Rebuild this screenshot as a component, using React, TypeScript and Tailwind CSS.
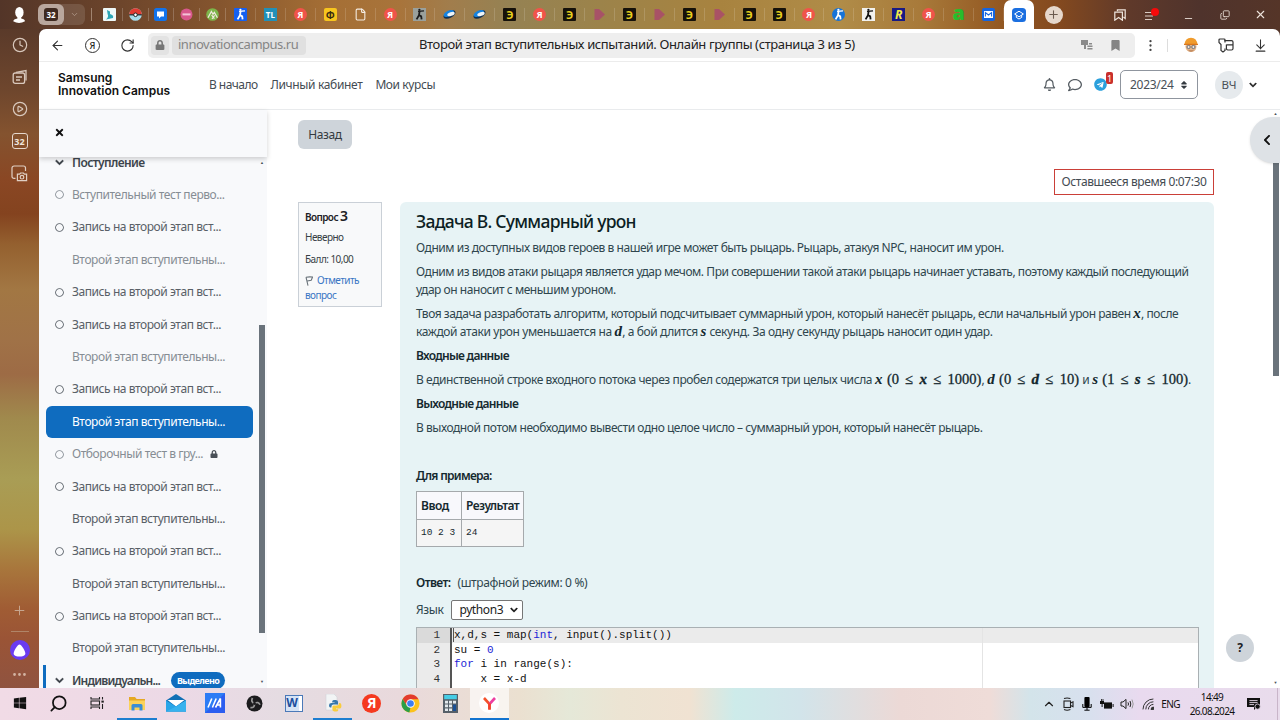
import type { ReactNode } from "react";
import {
  ArrowLeft, RotateCw, ArrowDownToLine, X, Clock, CirclePlay, Plus, Ellipsis, EllipsisVertical, File, ChevronDown,
  ChevronUp, Search, Minus, Copy,
} from "lucide-react";
import {
  FaRegBell, FaRegComment, FaTelegram, FaChevronDown, FaChevronLeft, FaLock, FaTimes, FaRegCircle, FaSort, FaWindows,
  FaBookmark,
} from "react-icons/fa";

function Fav({ children }: { children: ReactNode }) {
  return <div className="flex h-[13px] w-[13px] items-center justify-center">{children}</div>;
}

const Chev = ({ size = 9, color = "#343a40" }: { size?: number; color?: string }) => (
  <FaChevronDown size={size} color={color} stroke={color} strokeWidth={30} className="shrink-0" />
);

const Ya = () => (
  <div className="flex h-[13px] w-[13px] items-center justify-center rounded-full bg-[#f0544a] text-[9px] leading-none font-bold text-white">Я</div>
);
const Eh = () => (
  <div className="flex h-[13px] w-[13px] items-center justify-center rounded-[1px] bg-[#15110a] text-[11px] leading-none font-bold text-[#e8cf1e]">Э</div>
);
const Play = () => (
  <svg width="13" height="13" viewBox="0 0 13 13"><path d="M1.5 1H6L12 6.5L6 12H1.5Z" fill="#a94a6c" opacity=".85" /></svg>
);
const Lens = () => (
  <svg width="14" height="13" viewBox="0 0 14 13">
    <ellipse cx="7" cy="6.5" rx="7" ry="3.8" transform="rotate(-28 7 6.5)" fill="#12304f" />
    <ellipse cx="6.2" cy="5.4" rx="6" ry="3" transform="rotate(-28 6.2 5.4)" fill="#1583e0" />
    <ellipse cx="8.6" cy="6" rx="4.2" ry="2" transform="rotate(-20 8.6 6)" fill="#eef4f8" />
  </svg>
);
const Runner = ({ bg, fg, r }: { bg: string; fg: string; r: number }) => (
  <svg width="13" height="13" viewBox="0 0 13 13">
    <rect width="13" height="13" rx={r} fill={bg} />
    <path d="M5 3.4L11 2.8" stroke={fg} strokeWidth="1.2" />
    <path d="M6.6 3.2L6 7.2L3.6 11.4M6 7L8.2 8.4L8.6 11.4" stroke={fg} strokeWidth="1.8" fill="none" />
    <circle cx="6.4" cy="1.8" r="1.1" fill={fg} />
  </svg>
);
const Mail = () => (
  <svg width="13" height="13" viewBox="0 0 13 13">
    <rect width="13" height="13" rx="2" fill="#1565e0" />
    <rect x="2" y="3" width="9" height="7" fill="#fff" />
    <path d="M3.4 8.6V4.6L6.5 7L9.6 4.6V8.6" stroke="#1565e0" strokeWidth="1.1" fill="none" />
  </svg>
);

const smallTabs: ReactNode[] = [
  <svg width="13" height="13" viewBox="0 0 13 13"><rect width="13" height="13" rx="1" fill="#eef8f8" /><path d="M4 2L7 3.6V6Q11 7 10 10L3 11.5Q6 9 4.6 6Z" fill="#2ba5b5" /></svg>,
  <svg width="13" height="13" viewBox="0 0 13 13"><circle cx="6.5" cy="6.5" r="6.3" fill="#a8dcea" /><path d="M.2 6.5A6.3 6.3 0 0 1 12.8 6.5Z" fill="#e23b32" /><path d="M.2 6.8H12.8" stroke="#222" strokeWidth="1.2" /><circle cx="6.5" cy="6.8" r="1.8" fill="#fff" stroke="#222" /></svg>,
  <svg width="13" height="13" viewBox="0 0 13 13"><rect width="13" height="13" rx="2.5" fill="#1273eb" /><path d="M3 3.5H10V8.5H7L5 10.4V8.5H3Z" fill="#fff" /></svg>,
  <svg width="13" height="13" viewBox="0 0 13 13"><circle cx="6.5" cy="6.5" r="6" fill="#d8588c" /><rect x="2.5" y="5.4" width="8" height="2" fill="#f3c3d7" /></svg>,
  <svg width="13" height="13" viewBox="0 0 13 13"><circle cx="6.5" cy="6.5" r="6.3" fill="#7db54a" /><path d="M2 9.8L5.4 3.4L7 6.2L8.4 4.4L11.4 9.8M5.6 7L8.4 10.6M8.6 7.4L6 10.8" stroke="#f2e9e0" strokeWidth="1.2" fill="none" /></svg>,
];

const wideTabs: ReactNode[] = [
  <Runner bg="#1560f2" fg="#fff" r={1} />,
  <div className="flex h-[13px] w-[13px] items-center justify-center bg-[#2290b8] text-[8px] leading-none font-bold text-white">TL</div>,
  <Ya />,
  <div className="flex h-[13px] w-[13px] items-center justify-center rounded-[2px] bg-[#f7c51e] text-[10px] leading-none font-bold text-[#3a2c10]">Ф</div>,
  <File size={13} color="#f4ece2" strokeWidth={2} />,
  <Ya />,
  <Runner bg="#9aa09c" fg="#1c1c1c" r={0} />,
  <Lens />, <Lens />, <Eh />, <Ya />, <Eh />, <Play />, <Eh />, <Play />, <Eh />, <Play />, <Eh />, <Eh />, <Ya />,
  <Runner bg="#1673d8" fg="#fff" r={6.5} />,
  <Runner bg="#f1f1ee" fg="#111" r={0} />,
  <div className="flex h-[13px] w-[13px] shrink-0 items-center justify-center bg-[#171a86] text-[12px] leading-none font-bold text-[#f3ec4a] italic">R</div>,
  <Ya />,
  <div className="flex h-[13px] items-center pb-[4px] text-[20px] leading-none font-black text-[#28bd2c]">a</div>,
  <Mail />,
];

function TabStrip() {
  return (
    <div className="flex h-[29px] shrink-0 items-center bg-[linear-gradient(90deg,#533528_0,#6d452b_120px,#85552e_220px,#a56f35_330px,#a8743b_400px,#a17d4c_450px,#958253_510px,#9c834a_600px,#a8833f_720px,#b08c48_840px,#a87a3a_920px,#935822_1000px,#83491f_1060px,#5f392a_1130px,#4f332c_1200px,#553528_1280px)]">
      <div className="flex w-[38px] shrink-0 justify-center">
        <svg width="14" height="18" viewBox="0 0 14 18"><ellipse cx="7.4" cy="6.4" rx="4.2" ry="5.4" fill="#fff" /><path d="M5.4 10H9.2V12.4Q13 13.2 13 15.2Q7 18.8 1.2 15.2Q1.4 13.2 5.4 12.4Z" fill="#fff" /></svg>
      </div>
      <div className="flex h-[21px] w-[47px] shrink-0 items-center rounded-[6px] bg-white/12">
        <div className="flex h-[21px] w-[26px] items-center justify-center rounded-[6px] bg-[#b9a79d]">
          <div className="flex h-[13px] w-[14px] items-center justify-center rounded-[3px] bg-[#3f2a20] text-[8px] leading-none font-bold text-white">32</div>
        </div>
        <ChevronDown className="ml-[6px]" size={9} color="#b59f90" />
      </div>
      <div className="mr-[5px] ml-[6px] h-[13px] w-px shrink-0 bg-[#a18470]" />
      {smallTabs.map((t, i) => (
        <div key={i} className="flex w-[25.8px] shrink-0 justify-center border-r border-white/20"><Fav>{t}</Fav></div>
      ))}
      {wideTabs.map((t, i) => (
        <div key={i} className="flex w-[29.93px] shrink-0 justify-center border-r border-white/15"><Fav>{t}</Fav></div>
      ))}
      <div className="flex h-full w-[30px] shrink-0 items-center justify-center rounded-t-[7px] bg-white">
        <svg width="14" height="14" viewBox="0 0 14 14"><rect width="14" height="14" rx="3.5" fill="#1b6fe0" /><path d="M7 3.2L11.4 6L7 8.8L2.6 6ZM4.3 7.2V9.4L7 11L9.7 9.4V7.2" fill="none" stroke="#fff" strokeWidth="1" /></svg>
      </div>
      <div className="ml-[11px] flex h-[18px] w-[18px] shrink-0 items-center justify-center rounded-full bg-[#e6d8cc]"><Plus size={13} color="#6b5a4e" /></div>
      <div className="flex grow items-center justify-between pr-[13px] pl-[51px]">
        <svg width="12" height="12" viewBox="0 0 12 12" fill="none" stroke="#eee4dc" strokeWidth="1.2"><path d="M3.4 2.2V.8H11.2V9.4L9.4 8" /><path d="M.8 3.2H8.4V11.2L4.6 8.6L.8 11.2Z" /></svg>
        <svg width="16" height="14" viewBox="0 0 16 14"><path d="M1 4.5H8M1 8H9M1 11.5H8" stroke="#d9ccc4" strokeWidth="1.2" /><circle cx="11" cy="4" r="4" fill="#f50a0a" /></svg>
        <Minus size={11} color="#e5dad3" className="mt-[7px] ml-[5px]" />
        <Copy size={10} color="#eee4dc" className="ml-[7px] -scale-y-100" />
        <X size={13} color="#eee4dc" className="ml-[6px]" />
      </div>
    </div>
  );
}

function Rail() {
  return (
    <div className="flex w-[39px] shrink-0 flex-col items-center bg-[linear-gradient(180deg,#5a3a2a_0,#6e462d_60px,#84532f_105px,#8a4724_150px,#84431f_185px,#94602f_215px,#a27743_260px,#a07247_310px,#9d6b45_345px,#a08a4d_390px,#a99d55_450px,#ac9549_500px,#a8763c_540px,#a05c34_580px,#9a5436_610px,#8f5340_659px)] pt-[8px]">
      <Clock size={16} color="#d9c8bc" strokeWidth={1.8} />
      <svg className="mt-[16px]" width="16" height="16" viewBox="0 0 16 16" fill="none" stroke="#d9c8bc" strokeWidth="1.3"><path d="M4 3.4L14 1.6V11.4" /><rect x="1.2" y="4" width="11.4" height="10.4" rx="2" /><path d="M4 8H10M4 11H8" /></svg>
      <CirclePlay className="mt-[16px]" size={16} color="#d9c8bc" strokeWidth={1.8} />
      <div className="mt-[16px] flex h-[16px] w-[16px] items-center justify-center rounded-[3px] border border-[#e6d8cd] text-[9px] leading-none font-bold text-[#f0e5dc]">32</div>
      <svg className="mt-[16px]" width="17" height="17" viewBox="0 0 17 17" fill="none" stroke="#e0cfc3" strokeWidth="1.2"><path d="M4.5 13.4H3A2 2 0 0 1 1 11.4V3A2 2 0 0 1 3 1H12.5A2 2 0 0 1 14.5 3V6" /><path d="M6.4 9.2H8.6L9.6 8H12.4L13.4 9.2H15.6V15.6H6.4Z" /><circle cx="11" cy="12.2" r="1.8" /></svg>
      <div className="grow" />
      <Plus size={15} color="#c9aa94" strokeWidth={1.5} />
      <div className="mt-[13px] h-px w-[18px] bg-[#b08568]" />
      <div className="mt-[8px] flex h-[20px] w-[20px] items-center justify-center rounded-full bg-[#6a3bf0]">
        <svg width="13" height="13" viewBox="0 0 13 13"><path d="M6.5 .5C8.5 .5 12.3 7 12.3 9.4C12.3 12 9 12.4 6.5 12.4S.7 12 .7 9.4C.7 7 4.5 .5 6.5 .5Z" fill="#fff" /></svg>
      </div>
      <Ellipsis className="mt-[6px] mb-[5px]" size={17} color="#d3b3a2" />
    </div>
  );
}

function AddressBar() {
  return (
    <div className="flex h-[33px] shrink-0 items-center border-b border-[#ececec]">
      <ArrowLeft className="ml-[11px]" size={15} color="#333" strokeWidth={1.7} />
      <div className="ml-[20px] flex h-[15px] w-[15px] items-center justify-center rounded-full border border-[#333] text-[9px] leading-none font-medium text-[#222]">Я</div>
      <RotateCw className="ml-[20px]" size={15} color="#333" strokeWidth={1.8} />
      <div className="ml-[13px] flex h-[25px] w-[987px] items-center rounded-[5px] bg-[#eeeeee] pl-[3px]">
        <div className="flex h-[19px] w-[18px] items-center justify-center rounded-[4px] bg-[#e3e3e3]"><FaLock size={10} color="#777" /></div>
        <div className="ml-[3px] flex h-[19px] w-[134px] items-center rounded-[4px] bg-[#e0e0e0] pl-[6px] text-[13px] tracking-[-0.5px] text-[#858585]">innovationcampus.ru</div>
        <div className="ml-[113px] text-[13px] tracking-[-0.38px] whitespace-nowrap text-[#222]">Второй этап вступительных испытаний. Онлайн группы (страница 3 из 5)</div>
        <svg className="ml-auto" width="12" height="12" viewBox="0 0 12 12" fill="#8a8a8a"><path d="M0 1H7V6H5V10H3V6H0Z" /><path d="M8 4H11V5.4H8ZM6.4 6.6H11.5V8H6.4ZM6.4 9H11.5V10.4H6.4Z" /></svg>
        <FaBookmark className="mr-[14px] ml-[17px]" size={11} color="#858585" />
      </div>
      <EllipsisVertical className="ml-[8px]" size={15} color="#444" strokeWidth={1.7} />
      <div className="ml-[9px] h-[13px] w-px bg-[#ddd]" />
      <svg className="ml-[15px]" width="16" height="16" viewBox="0 0 16 16"><circle cx="8" cy="9.5" r="5.5" fill="#e3b48a" /><path d="M1.6 7.6Q2 1 8 .8Q14 1 14.4 7.6Z" fill="#f09b2c" /><path d="M1 7.4H15" stroke="#d9761c" strokeWidth="1.4" /><circle cx="5.6" cy="10" r="1.6" fill="#f4e6dc" stroke="#5d6a78" strokeWidth=".9" /><circle cx="10.4" cy="10" r="1.6" fill="#f4e6dc" stroke="#5d6a78" strokeWidth=".9" /><path d="M5 13.2Q8 16 11 13.2Q8 14 5 13.2Z" fill="#a8683f" /></svg>
      <svg className="ml-[19px]" width="16" height="15" viewBox="0 0 16 15" fill="none" stroke="#333" strokeWidth="1.2"><path d="M7 4.4V2Q7 1 6 1H2Q1 1 1 2V4.5L3 6.5V12.5L5 14L7 12.5V10.4" /><path d="M6.4 2.6H13.5Q15 2.6 15 4V10.5Q15 12 13.5 12H9.8Q8.4 12 8.4 10.6V6.4M8.4 6.8H15" /></svg>
      <ArrowDownToLine className="ml-[19px]" size={15} color="#333" strokeWidth={1.7} />
    </div>
  );
}

function SiteHeader() {
  return (
    <div className="flex h-[48px] shrink-0 items-center border-b border-[#e9ebed] pb-[2px] text-[12px] text-[#444c53]">
      <div className="w-[170px] pl-[19px] font-['Inter',sans-serif] text-[12px] leading-[12.5px] font-semibold tracking-[0.01px] text-[#111]">
        Samsung<br />Innovation Campus
      </div>
      <div className="flex items-center gap-[13px] whitespace-nowrap">
        <span className="tracking-[-0.55px]">В начало</span>
        <span className="tracking-[-0.35px]">Личный кабинет</span>
        <span className="tracking-[-0.4px]">Мои курсы</span>
      </div>
      <FaRegBell className="ml-auto" size={13} color="#565d63" />
      <FaRegComment className="ml-[12px]" size={14} color="#565d63" />
      <div className="relative ml-[12px]">
        <FaTelegram size={13} color="#2ba0dc" />
        <div className="absolute -top-[6px] left-[12px] flex h-[12px] w-[7px] items-center justify-center rounded-[2px] bg-[#c9302c] text-[9px] leading-none text-white">1</div>
      </div>
      <div className="ml-[13px] flex h-[29px] w-[78px] items-center justify-between rounded-[5px] border border-[#8f959e] pr-[8px] pl-[9px] text-[12px] text-[#495057]">
        <span className="tracking-[-0.3px]">2023/24</span><FaSort size={10} color="#343a40" />
      </div>
      <div className="ml-[17px] flex h-[28px] w-[28px] items-center justify-center rounded-full bg-[#e6eaed] text-[11.5px] text-[#495057]">ВЧ</div>
      <div className="mr-[23px] ml-[6px]"><Chev size={8} color="#222" /></div>
    </div>
  );
}

type Item = { t: string; ring?: boolean; dim?: boolean; active?: boolean; lock?: boolean };
const rec = "Запись на второй этап вст...";
const second = "Второй этап вступительны...";
const items: Item[] = [
  { t: "Вступительный тест перво...", ring: true, dim: true },
  { t: rec, ring: true },
  { t: second, dim: true },
  { t: rec, ring: true },
  { t: rec, ring: true },
  { t: second, dim: true },
  { t: rec, ring: true },
  { t: second, active: true },
  { t: "Отборочный тест в гру...", ring: true, dim: true, lock: true },
  { t: rec, ring: true },
  { t: second },
  { t: rec, ring: true },
  { t: second },
  { t: rec, ring: true },
  { t: second },
];

function Sidebar() {
  return (
    <div className="flex w-[228px] shrink-0 flex-col bg-[#f8f9fb]">
      <div className="z-10 flex h-[47px] shrink-0 items-center pb-[2px] pl-[15px] shadow-[0_2px_5px_rgba(0,0,0,0.18)]"><FaTimes size={11} color="#111" /></div>
      <div className="flex min-h-0 grow overflow-hidden">
        <div className="-mt-[10.6px] flex w-[214px] flex-col pl-[4px]">
          <div className="flex h-[32.4px] shrink-0 items-center pl-[12px]">
            <Chev />
            <span className="ml-[8px] text-[12px] font-semibold tracking-[-0.6px] text-[#3e464d]">Поступление</span>
          </div>
          {items.map((it, i) => (
            <div key={i} className={"ml-[3px] flex h-[32.4px] shrink-0 items-center rounded-[6px] pl-[9px] text-[12px] whitespace-nowrap " + (it.active ? "bg-[#0f6cbf] text-white" : it.dim ? "text-[#868d94]" : "text-[#596067]")}>
              <div className="w-[17px] shrink-0">{it.ring && <FaRegCircle size={9} />}</div>
              <span className="tracking-[-0.43px]">{it.t}</span>
              {it.lock && <FaLock className="ml-[7px]" size={8} color="#495057" />}
            </div>
          ))}
          <div className="flex h-[32.4px] shrink-0 items-center border-l-[3px] border-[#0f6cbf] pl-[9px] whitespace-nowrap">
            <Chev />
            <span className="ml-[8px] text-[12px] font-semibold tracking-[-0.8px] text-[#3e464d]">Индивидуальн...</span>
            <span className="ml-[11px] rounded-full bg-[#0f6cbf] px-[6px] text-[9px] leading-[17px] font-bold tracking-[-0.6px] text-white">Выделено</span>
          </div>
        </div>
        <div className="flex w-[14px] flex-col items-center pt-[4px] text-[4px] leading-none text-[#495057]">
          <span className="ml-[4px]">▲</span>
          <div className="mt-[160px] ml-[4px] h-[308px] w-[6px] bg-[#6a737b]" />
          <span className="mt-[47px] ml-[4px]">▼</span>
        </div>
      </div>
    </div>
  );
}

function V({ children }: { children: ReactNode }) {
  return <i className="font-['Liberation_Serif',serif] text-[15px] leading-none font-bold tracking-[0.3px] text-[#12262d]">{children}</i>;
}
function M({ children }: { children: ReactNode }) {
  return <span className="font-['Liberation_Serif',serif] text-[14.5px] leading-none tracking-normal text-[#12262d] [-webkit-text-stroke:0.3px_#12262d] [word-spacing:2.6px]">{children}</span>;
}

function Editor() {
  return (
    <div className="mt-[7px] flex h-[90px] w-[783px] border border-[#a9b0b3] bg-white font-['Liberation_Mono',monospace] text-[11px] leading-[14.5px] tracking-normal">
      <div className="flex w-[35px] flex-col border-r-2 border-[#555] bg-[#ebebeb] text-right text-[#333]">
        <div className="bg-[#dadada] pr-[10px]">1</div>
        <div className="pr-[10px]">2</div>
        <div className="pr-[10px]">3</div>
        <div className="pr-[10px]">4</div>
      </div>
      <div className="flex w-[531px] flex-col border-r border-[#e4e4e4] whitespace-pre text-[#111]">
        <div className="flex bg-[#ebebeb] pl-[2px]"><span className="-ml-px h-[14px] border-l border-[#555]" />x,d,s = map(<span className="text-[#221fd6]">int</span>, input().split())</div>
        <div className="pl-[2px]">su = <span className="text-[#221fd6]">0</span></div>
        <div className="pl-[2px]"><span className="text-[#221fd6]">for</span> i in range(s):</div>
        <div className="pl-[2px]">{"    x = x-d"}</div>
      </div>
      <div className="h-[14.5px] grow bg-[#ebebeb]" />
    </div>
  );
}

function Question() {
  return (
    <div className="h-[600px] w-[814px] shrink-0 rounded-t-[6px] bg-[#e7f3f5] pt-[8px] pl-[16px] text-[12px] leading-[18px] tracking-[-0.455px] whitespace-nowrap text-[#2f464e]">
      <h1 className="mb-[7px] text-[17.5px] leading-[22px] font-medium tracking-[-0.72px] text-[#0c1e24]">Задача B. Суммарный урон</h1>
      <p className="mb-[6px]">Одним из доступных видов героев в нашей игре может быть рыцарь. Рыцарь, атакуя NPC, наносит им урон.</p>
      <p className="mb-[6px]">Одним из видов атаки рыцаря является удар мечом. При совершении такой атаки рыцарь начинает уставать, поэтому каждый последующий<br />удар он наносит с меньшим уроном.</p>
      <p className="mb-[6px] h-[36px]"><span className="tracking-[-0.47px]">Твоя задача разработать алгоритм, который подсчитывает суммарный урон, который нанесёт рыцарь, если начальный урон равен <V>x</V>, после</span><br /><span className="tracking-[-0.4px]">каждой атаки урон уменьшается на <V>d</V>, а бой длится <V>s</V> секунд. За одну секунду рыцарь наносит один удар.</span></p>
      <p className="mb-[6px] font-semibold tracking-[-0.72px] text-[#15292f]">Входные данные</p>
      <div className="mb-[6px] flex h-[18px] items-baseline tracking-[-0.41px]">
        <span>В единственной строке входного потока через пробел содержатся три целых числа</span>
        <span className="ml-[3px]"><V>x</V></span>
        <span className="ml-[4px]"><M>(0 ≤ <V>x</V> ≤ 1000)</M>,</span>
        <span className="ml-[3px]"><V>d</V></span>
        <span className="ml-[4px]"><M>(0 ≤ <V>d</V> ≤ 10)</M></span>
        <span className="ml-[3px]">и</span>
        <span className="ml-[3px]"><V>s</V></span>
        <span className="ml-[4px]"><M>(1 ≤ <V>s</V> ≤ 100)</M>.</span>
      </div>
      <p className="mb-[6px] font-semibold tracking-[-0.72px] text-[#15292f]">Выходные данные</p>
      <p className="mb-[30px]">В выходной потом необходимо вывести одно целое число – суммарный урон, который нанесёт рыцарь.</p>
      <p className="mb-[6px] font-semibold tracking-[-0.72px] text-[#15292f]">Для примера:</p>
      <div className="grid h-[56px] w-[108px] grid-cols-[45px_61px] grid-rows-[28px_26px] border border-[#a5a9ac] bg-[#f8f8fc] text-[#15292f]">
        <div className="flex items-center border-r border-b border-[#a5a9ac] pl-[4px] font-semibold">Ввод</div>
        <div className="flex items-center border-b border-[#a5a9ac] pl-[4px] font-semibold tracking-[-0.55px]">Результат</div>
        <div className="flex items-center border-r border-[#a5a9ac] bg-[#f5f5f5] pl-[4px] font-['Liberation_Mono',monospace] text-[9.5px] tracking-normal">10 2 3</div>
        <div className="flex items-center bg-[#f5f5f5] pl-[4px] font-['Liberation_Mono',monospace] text-[9.5px] tracking-normal">24</div>
      </div>
      <div className="mt-[27px] flex gap-[7px]"><b className="font-semibold tracking-[-0.6px] text-[#15292f]">Ответ:</b><span className="tracking-[-0.35px]">(штрафной режим: 0 %)</span></div>
      <div className="mt-[8px] flex h-[20px] items-center gap-[8px]">
        <span className="tracking-[-0.4px]">Язык</span>
        <div className="flex h-[20px] w-[72px] items-center justify-between rounded-[2px] border border-[#767676] bg-white pr-[4px] pl-[7px] tracking-[-0.4px] text-[#222]">python3<Chev size={8} color="#111" /></div>
      </div>
      <Editor />
    </div>
  );
}

function MainPane() {
  return (
    <div className="flex min-w-0 grow overflow-hidden bg-white">
      <div className="flex w-[947px] shrink-0 flex-col pt-[10px] pl-[31px]">
        <div className="flex h-[29px] w-[54px] shrink-0 items-center justify-center rounded-[6px] bg-[#ced4da] text-[12px] tracking-[-0.4px] text-[#343a40]">Назад</div>
        <div className="mt-[20px] ml-auto flex h-[26px] w-[160px] shrink-0 items-center justify-center border border-[#ca3f38] text-[12px] tracking-[-0.4px] whitespace-nowrap text-[#444b52]">Оставшееся время 0:07:30</div>
        <div className="mt-[7px] flex items-start justify-between">
          <div className="h-[105px] w-[84px] border border-[#cad0d7] bg-[#f8f9fa] pl-[6px] text-[10px] tracking-[-0.55px] text-[#373f46]">
            <div className="mt-[4px] leading-[18px]"><span className="font-semibold tracking-[-0.6px] text-[#1d2125]">Вопрос</span> <span className="text-[14px] font-semibold text-[#1d2125]">3</span></div>
            <div className="mt-[4px] leading-[15px]">Неверно</div>
            <div className="mt-[7px] leading-[14px]">Балл: 10,00</div>
            <div className="mt-[7px] leading-[14.5px] text-[#3a76c4]">
              <svg className="mr-[4px] inline" width="8" height="10" viewBox="0 0 8 10" fill="none" stroke="#6a737b" strokeWidth="1.1"><path d="M1 1.2L3 9.6M1 1.2Q4 .6 7.6 1L6.2 4.2L2.2 5" /></svg>Отметить<br />вопрос
            </div>
          </div>
          <Question />
        </div>
      </div>
      <div className="flex grow flex-col items-end">
        <div className="flex h-[7px] w-[9px] shrink-0 items-center justify-center text-[4px] leading-none text-[#495057]">▲</div>
        <div className="z-10 flex h-[46px] w-[30px] shrink-0 items-center justify-center rounded-l-full bg-[#dee2e6] pl-[3px] shadow"><FaChevronLeft size={12} color="#111" /></div>
        <div className="mr-[1px] h-[213px] w-[6px] shrink-0 bg-[#6a737b]" />
        <div className="mt-[258px] mr-[26px] flex h-[28px] w-[28px] shrink-0 items-center justify-center rounded-full bg-[#ced4da] text-[12px] font-bold text-[#1d2125]">?</div>
        <div className="mt-[17px] flex h-[8px] w-[9px] shrink-0 items-center justify-center text-[4px] leading-none text-[#495057]">▼</div>
      </div>
    </div>
  );
}

const apps: { el: ReactNode; line?: boolean; active?: boolean }[] = [
  { el: <FaWindows size={14} color="#111" /> },
  { el: <Search size={19} color="#111" strokeWidth={2.2} className="-scale-x-100" /> },
  { el: <svg width="15" height="14" viewBox="0 0 15 14" fill="none" stroke="#222" strokeWidth="1.1"><path d="M1 1V3H9.5V1M1 13V11H9.5V13M12.5 1V3.4M12.5 8V13" /><rect x="1" y="5" width="8.5" height="4" /><path d="M11.4 5.6H13.8" strokeWidth="2" /></svg> },
  { el: <svg width="18" height="17" viewBox="0 0 18 17"><path d="M1 2H7L8.6 4H17V15H1Z" fill="#e5a823" /><path d="M1 5.5H17V15H1Z" fill="#fbd25a" /><path d="M3.5 15.5V10.5Q3.5 9 5 9H13Q14.5 9 14.5 10.5V15.5H11.5V12.4H6.5V15.5Z" fill="#3a8ed6" /></svg>, line: true },
  { el: <svg width="20" height="18" viewBox="0 0 20 18"><path d="M0 6.5L10 0L20 6.5V17.5H0Z" fill="#1270b5" /><path d="M1.5 6H18.5L10 12.5Z" fill="#fff" /><path d="M0 6.5L10 12.5L20 6.5V17.5H0Z" fill="#29a5e8" /><path d="M0 17.5L10 12.5L20 6.5V17.5Z" fill="#38b2ee" /></svg> },
  { el: <svg width="20" height="20" viewBox="0 0 20 20"><rect width="20" height="20" fill="#2b5df0" /><path d="M0 0H20L0 20Z" fill="#2c7cf5" /><path d="M3 14.5L6.8 5.5M7.4 14.5L11.2 5.5M10.5 14.5L15.4 5.5V14.5M12 12H15.4" stroke="#fff" strokeWidth="1.6" fill="none" /></svg> },
  { el: <svg width="17" height="17" viewBox="0 0 17 17"><circle cx="8.5" cy="8.5" r="8" fill="#1b1b1d" /><path d="M8.5 8.5Q4.5 7 6.5 3M8.5 8.5Q12.5 6 14 9.8M8.5 8.5Q8.8 13 4.4 12.6" stroke="#999" strokeWidth="1.7" fill="none" /><circle cx="8.5" cy="8.5" r="1.4" fill="#1b1b1d" /></svg> },
  { el: <div className="flex h-[17px] w-[18px] items-center border border-[#4a79b8] bg-white"><div className="flex h-[15px] w-[13px] items-center justify-center bg-[#d5e3f5] text-[12px] leading-none font-bold text-[#1d4f9e]">W</div></div> },
  { el: <svg width="18" height="18" viewBox="0 0 18 18"><path d="M2 0H10L13 3V16H2Z" fill="#f2f4f5" stroke="#d0d5d8" strokeWidth=".6" /><path d="M10.5 6Q14 5.4 14 7.8V10.6H9.4Q7.4 10.6 7.4 13.4H6.4Q5 13.4 5 11.2Q5 9 7.6 9H10.6V8.4H8.2V7.4Q8.4 6 10.5 6Z" fill="#3777ab" /><path d="M12 17.6Q8.4 17.6 8.4 15.6V12.8Q8.4 11.6 10 11.6H13Q15 11.6 15 9H15.8Q17.4 9 17.4 12Q17.4 14.6 15 14.6H12V15.2H14.2V16.2Q14 17.6 12 17.6Z" fill="#f9cc3d" /></svg>, line: true },
  { el: <div className="flex h-[19px] w-[19px] items-center justify-center rounded-full bg-[#f5391f] text-[14px] leading-none font-bold text-white">Я</div> },
  { el: <svg width="19" height="19" viewBox="0 0 20 20"><circle cx="10" cy="10" r="9.5" fill="#fbc21b" /><path d="M1.8 5.2A9.5 9.5 0 0 1 18.4 5.6H10L6 12Z" fill="#e33b2e" /><path d="M1.8 5.2L6.2 12.4L10 14.2L8.8 19.4A9.5 9.5 0 0 1 1.8 5.2Z" fill="#2a9e48" /><circle cx="10" cy="10" r="4.5" fill="#fff" /><circle cx="10" cy="10" r="3.5" fill="#3c7ef0" /></svg> },
  { el: <svg width="15" height="19" viewBox="0 0 15 19"><rect width="15" height="19" fill="#566069" /><rect x="1.2" y="1" width="12.6" height="4.2" fill="#46cce5" /><path d="M2 6.8H5V9.4H2ZM6 6.8H9V9.4H6ZM10 6.8H13V9.4H10ZM2 10.6H5V13.2H2ZM6 10.6H9V13.2H6ZM2 14.4H5V17H2ZM6 14.4H9V17H6Z" fill="#e2e8ec" /><path d="M10 10.6H13V17H10Z" fill="#1a4f94" /></svg> },
  { el: <div className="flex h-[20px] w-[20px] items-center justify-center rounded-full bg-white"><svg width="13" height="13" viewBox="0 0 13 13" fill="none" strokeWidth="2.6"><path d="M1 1L6.5 7V12.6" stroke="#f4512c" /><path d="M12 1L6.5 7" stroke="#ee3fa0" /><path d="M6.5 6.4V12.6" stroke="#f4412c" /></svg></div>, active: true },
];

function Taskbar() {
  return (
    <div className="flex h-[32px] shrink-0 bg-[linear-gradient(90deg,#f1dbe6_0,#ecd9e6_180px,#e5dce2_280px,#e9d9dc_400px,#ebe0d0_520px,#e5e8d8_570px,#ece4d3_620px,#f0e2d2_690px,#cdebea_735px,#d2e4ea_800px,#ecd9d6_900px,#efdcd8_990px,#d3e4ea_1030px,#d8e0ee_1090px,#e9daef_1140px,#e9dcec_1280px)] text-[10px] text-[#111]">
      {apps.map((a, i) => (
        <div key={i} className={"flex w-[39.15px] shrink-0 items-center justify-center border-b-2 " + (a.active ? "border-[#1173cf] bg-white/65" : a.line ? "border-[#1d7ed0]" : "border-transparent")}>{a.el}</div>
      ))}
      <div className="ml-auto flex items-center">
        <ChevronUp size={14} color="#222" strokeWidth={2} />
        <svg className="ml-[7px]" width="11" height="14" viewBox="0 0 11 14" fill="none" stroke="#222" strokeWidth="1.1"><rect x="1" y="4" width="6.5" height="6.5" /><path d="M7.5 6L10 4.8V9.6L7.5 8.4M1 1.6Q4 .4 7.4 1.6M1 12.6Q4 13.8 7.4 12.6" /></svg>
        <svg className="ml-[8px]" width="10" height="14" viewBox="0 0 10 14"><rect x="2.4" y="0" width="5.2" height="10" rx="1" fill="#000" /><path d="M.8 7V10.4H9.2V7M5 10.4V13M2.4 13.2H7.6" stroke="#000" strokeWidth="1" fill="none" /></svg>
        <svg className="ml-[8px]" width="14" height="11" viewBox="0 0 14 11"><path d="M4 3.4H12V9.6H4Z" fill="#111" /><path d="M12.6 5H13.6V8H12.6ZM0 2H4V5H2.6V8H1.6V5H0ZM1 0H1.8V2H1ZM2.6 0H3.4V2H2.6Z" fill="#111" /></svg>
        <svg className="ml-[6px]" width="14" height="12" viewBox="0 0 14 12" fill="none" stroke="#222" strokeWidth="1"><path d="M1 4V8H3L6 10.6V1.4L3 4Z" /><path d="M8 4.4Q9 6 8 7.6M10 3Q11.6 6 10 9" /><path d="M12 1.6Q14.4 6 12 10.4" stroke="#999" /></svg>
        <svg className="ml-[8px]" width="12" height="12" viewBox="0 0 12 12" fill="none" stroke="#333" strokeWidth="1"><path d="M1 11.4A10.4 10.4 0 0 1 11.4 1M3.8 11.4A7.6 7.6 0 0 1 11.4 3.8M6.4 11.4A5 5 0 0 1 11.4 6.4" /><path d="M9 11.6A2.6 2.6 0 0 1 11.6 9V11.6Z" fill="#333" /></svg>
        <span className="ml-[7px] text-[10px] tracking-[-0.6px]">ENG</span>
        <div className="ml-[9px] w-[46px] text-center text-[10px] leading-[14.5px] tracking-[-0.65px] whitespace-nowrap">14:49<br />26.08.2024</div>
        <svg className="ml-[12px]" width="14" height="14" viewBox="0 0 14 14"><path d="M0 1H13V10H10L7 13V10H0Z" fill="#111" /><path d="M2.4 3.6H10.6M2.4 5.6H10.6M2.4 7.6H7" stroke="#eadcec" strokeWidth=".9" /><circle cx="10.6" cy="9.6" r="2.6" fill="#111" stroke="#eadcec" strokeWidth=".8" /></svg>
        <div className="mr-[2px] ml-[16px] h-[32px] w-px bg-[#c9b5c9]" />
      </div>
    </div>
  );
}

export default function App() {
  return (
    <div className="flex h-[720px] w-[1280px] flex-col overflow-hidden font-['Noto_Sans',sans-serif]">
      <TabStrip />
      <div className="flex min-h-0 grow bg-[#54362a]">
        <Rail />
        <div className="flex w-[1241px] shrink-0 flex-col overflow-hidden rounded-t-[7px] bg-white">
          <AddressBar />
          <SiteHeader />
          <div className="flex min-h-0 grow">
            <Sidebar />
            <MainPane />
          </div>
        </div>
      </div>
      <Taskbar />
    </div>
  );
}
